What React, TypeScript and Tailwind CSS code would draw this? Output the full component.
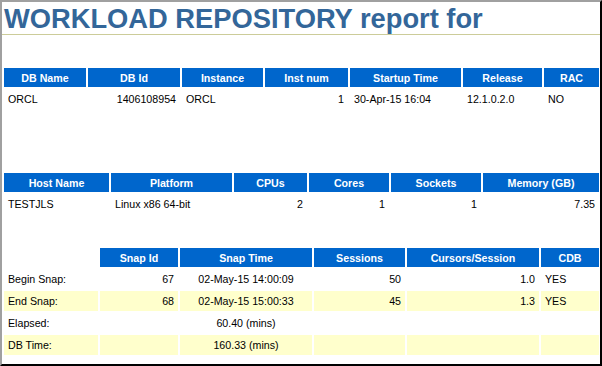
import React from "react";

type Align = "l" | "r" | "c";

function HeadCell({ children }: { children?: React.ReactNode }) {
  if (children === undefined || children === "") {
    return <div className="h-[19px]" />;
  }
  return (
    <div className="h-[19px] flex items-center justify-center bg-[#0066cc] text-white font-bold text-[10.67px] px-[4px] whitespace-nowrap">
      {children}
    </div>
  );
}

function Cell({ children, align, yellow }: { children?: React.ReactNode; align: Align; yellow?: boolean }) {
  const a = align === "r" ? "justify-end" : align === "c" ? "justify-center" : "justify-start";
  return (
    <div
      className={`h-[20px] flex items-center px-[4px] text-[10.67px] text-black whitespace-nowrap ${a} ${
        yellow ? "bg-[#ffffcc]" : "bg-white"
      }`}
    >
      {children}
    </div>
  );
}

export default function App() {
  const t1h = ["DB Name", "DB Id", "Instance", "Inst num", "Startup Time", "Release", "RAC"];
  const t1d: [string, Align][] = [
    ["ORCL", "l"],
    ["1406108954", "r"],
    ["ORCL", "l"],
    ["1", "r"],
    ["30-Apr-15 16:04", "l"],
    ["12.1.0.2.0", "l"],
    ["NO", "l"],
  ];
  const t2h = ["Host Name", "Platform", "CPUs", "Cores", "Sockets", "Memory (GB)"];
  const t2d: [string, Align][] = [
    ["TESTJLS", "l"],
    ["Linux x86 64-bit", "l"],
    ["2", "r"],
    ["1", "r"],
    ["1", "r"],
    ["7.35", "r"],
  ];
  const t3h = ["", "Snap Id", "Snap Time", "Sessions", "Cursors/Session", "CDB"];
  const aligns: Align[] = ["l", "r", "c", "r", "r", "l"];
  const t3rows: string[][] = [
    ["Begin Snap:", "67", "02-May-15 14:00:09", "50", "1.0", "YES"],
    ["End Snap:", "68", "02-May-15 15:00:33", "45", "1.3", "YES"],
    ["Elapsed:", "", "60.40 (mins)", "", "", ""],
    ["DB Time:", "", "160.33 (mins)", "", "", ""],
  ];

  return (
    <div className="w-[602px] h-[366px] overflow-hidden bg-white border-t-2 border-l-2 border-r-2 border-b-2 border-t-[#a0a0a0] border-l-[#a0a0a0] border-r-black border-b-black font-['Liberation_Sans',Arial,Helvetica,sans-serif]">
      <div className="pt-[3px] pb-[1px] border-b border-[#cccc99]">
        <div className="pl-[2px] text-[27.3px] leading-[28px] font-bold text-[#336699] whitespace-nowrap">
          WORKLOAD REPOSITORY report for
        </div>
      </div>

      <div className="pl-[2px] mt-[33px]">
        <div className="grid grid-cols-[82px_92px_81px_83px_111px_79px_55px] gap-[2px]">
          {t1h.map((h) => (
            <HeadCell key={h}>{h}</HeadCell>
          ))}
          {t1d.map(([v, a], i) => (
            <Cell key={i} align={a}>
              {v}
            </Cell>
          ))}
        </div>
      </div>

      <div className="pl-[2px] mt-[64px]">
        <div className="grid grid-cols-[105px_121px_73px_80px_90px_116px] gap-[2px]">
          {t2h.map((h) => (
            <HeadCell key={h}>{h}</HeadCell>
          ))}
          {t2d.map(([v, a], i) => (
            <Cell key={i} align={a}>
              {v}
            </Cell>
          ))}
        </div>
      </div>

      <div className="pl-[2px] mt-[34px]">
        <div className="grid grid-cols-[94px_78px_132px_91px_132px_58px] gap-[2px]">
          {t3h.map((h, i) => (
            <HeadCell key={i}>{h}</HeadCell>
          ))}
          {t3rows.map((row, r) =>
            row.map((v, c) => (
              <Cell key={`${r}-${c}`} align={aligns[c]} yellow={r % 2 === 1}>
                {v}
              </Cell>
            ))
          )}
        </div>
      </div>
    </div>
  );
}
